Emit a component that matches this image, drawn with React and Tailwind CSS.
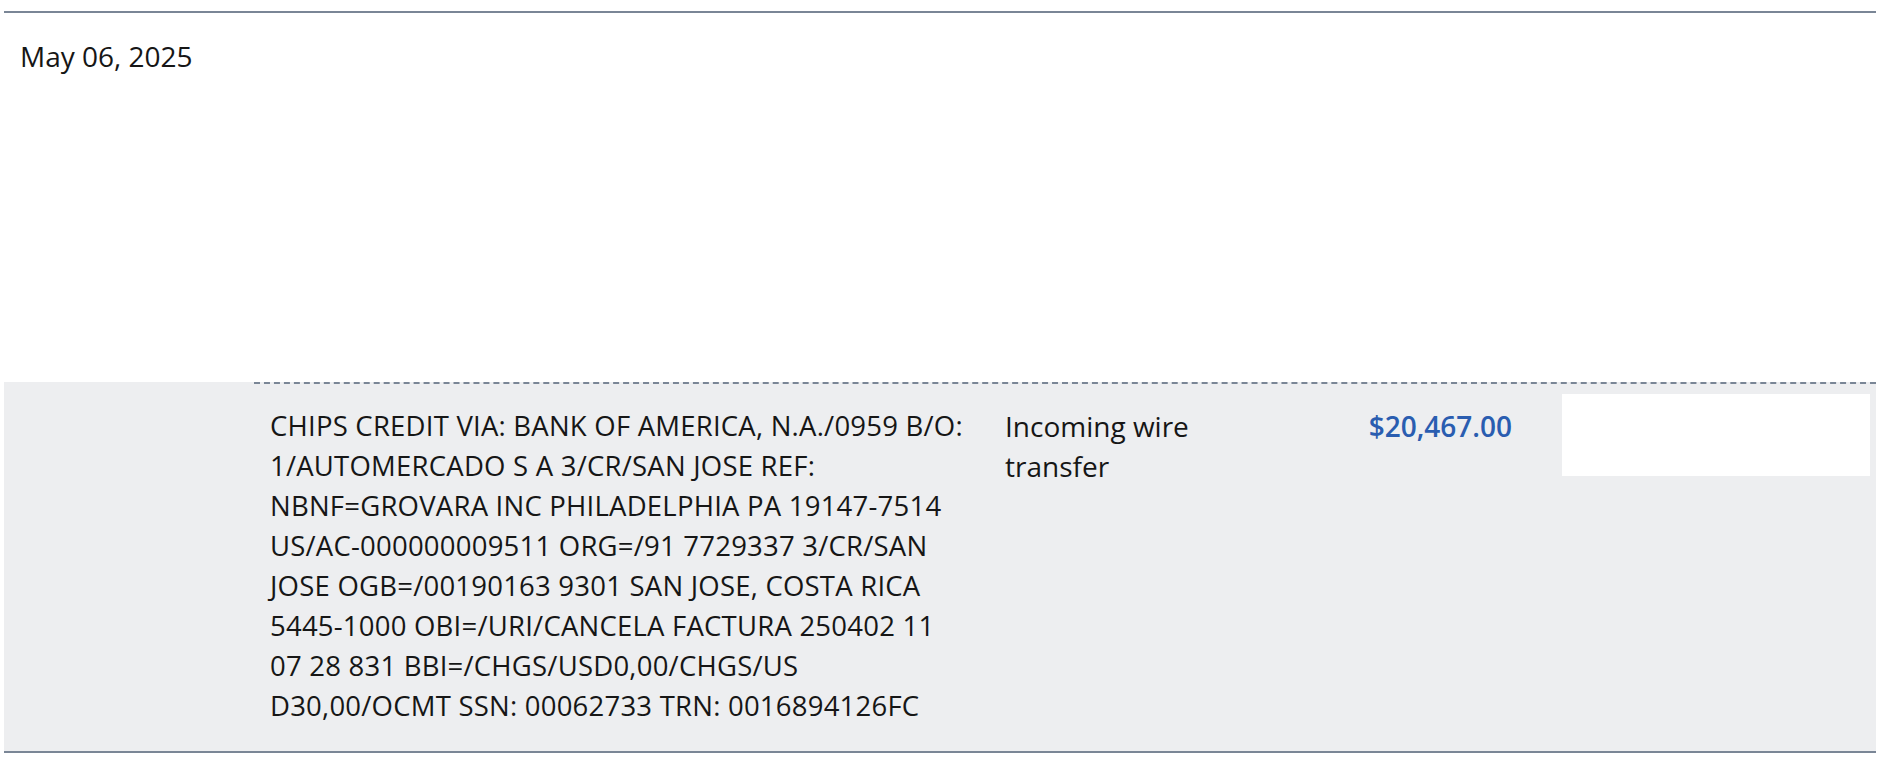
const lines = [
  "CHIPS CREDIT VIA: BANK OF AMERICA, N.A./0959 B/O:",
  "1/AUTOMERCADO S A 3/CR/SAN JOSE REF:",
  "NBNF=GROVARA INC PHILADELPHIA PA 19147-7514",
  "US/AC-000000009511 ORG=/91 7729337 3/CR/SAN",
  "JOSE OGB=/00190163 9301 SAN JOSE, COSTA RICA",
  "5445-1000 OBI=/URI/CANCELA FACTURA 250402 11",
  "07 28 831 BBI=/CHGS/USD0,00/CHGS/US",
  "D30,00/OCMT SSN: 00062733 TRN: 0016894126FC",
];

export default function App() {
  return (
    <div
      className="bg-white min-h-[762px] pt-[11px] pl-[4px] text-[#161616]"
      style={{ fontFamily: '"Open Sans", "Noto Sans", sans-serif' }}
    >
      <div className="w-[1872px] border-t-2 border-b-2 border-[#7a8696]">
        <div className="h-[369px] pl-[16px] pt-[23px] text-[28px] leading-[40px]">
          May 06, 2025
        </div>
        <div className="flex bg-[#edeef0]">
          <div className="w-[250px] shrink-0" />
          <div className="flex flex-1 border-t-2 border-dashed border-[#7a8696] leading-[40px]">
            <div className="w-[730px] shrink-0 pl-[16px] pr-[4px] pt-[22px] pb-[25px] text-[27.5px] tracking-[0.22px] whitespace-nowrap">
              {lines.map((l, i) => (
                <div key={i}>{l}</div>
              ))}
            </div>
            <div className="w-[290px] shrink-0 pl-[21px] pr-[17px] pt-[22px] text-[28px]">
              Incoming wire transfer
            </div>
            <div className="w-[253px] shrink-0 pr-[15px] pt-[22px] text-right text-[28px] font-semibold text-[#2a5db0]">
              $20,467.00
            </div>
            <div className="flex-1 pl-[35px] pr-[6px] pt-[10px]">
              <div className="h-[82px] bg-white" />
            </div>
          </div>
        </div>
      </div>
    </div>
  );
}
